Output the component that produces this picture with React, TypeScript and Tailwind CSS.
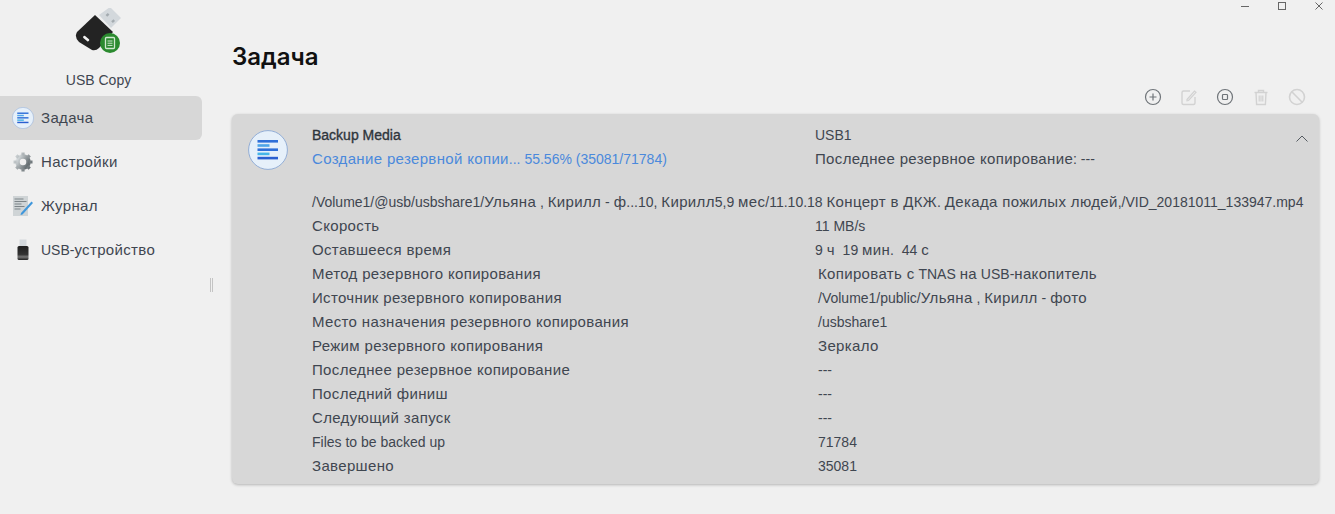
const rows: [string, string, boolean?][] = [
  ["Скорость", "11 MB/s", true],
  ["Оставшееся время", "9 ч  19 мин.  44 с", true],
  ["Метод резервного копирования", "Копировать с TNAS на USB-накопитель"],
  ["Источник резервного копирования", "/Volume1/public/Ульяна , Кирилл - фото"],
  ["Место назначения резервного копирования", "/usbshare1"],
  ["Режим резервного копирования", "Зеркало"],
  ["Последнее резервное копирование", "---"],
  ["Последний финиш", "---"],
  ["Следующий запуск", "---"],
  ["Files to be backed up", "71784"],
  ["Завершено", "35081"],
];

// cyrillic runs sit a bit larger than latin in the shot, so they get their own size
function Txt({ children }: { children: string }) {
  const parts = children.split(/([А-Яа-яЁё]+(?:\s+[А-Яа-яЁё]+)*)/);
  return (
    <>
      {parts.map((part, i) =>
        i % 2 === 1 ? (
          <span key={i} className="text-[15px] tracking-[0.34px]">
            {part}
          </span>
        ) : (
          part
        ),
      )}
    </>
  );
}

function TaskIcon({ size }: { size: number }) {
  return (
    <svg width={size} height={size} viewBox="0 0 40 40">
      <circle cx="20" cy="20" r="19.4" fill="#e6f0fa" stroke="#7f9fd0" strokeWidth="0.8" />
      <rect x="9.5" y="10" width="20.5" height="2.6" fill="#2f6fd8" />
      <rect x="9.5" y="14.2" width="12" height="2.6" fill="#4fa5e8" />
      <rect x="9.5" y="18.4" width="20.5" height="2.6" fill="#2f6fd8" />
      <rect x="9.5" y="22.6" width="12" height="2.6" fill="#45b5e8" />
      <rect x="9.5" y="26.8" width="20.5" height="2.6" fill="#2a5fd0" />
    </svg>
  );
}

function UsbLogo() {
  return (
    <svg width="48" height="48" viewBox="0 0 48 48">
      <path d="M24 7 L35 -1 L46 10 L36 20 Z" fill="#d3d8dc" />
      <rect x="31" y="6" width="3" height="2.4" fill="#a4abb0" transform="rotate(-42 32 7)" />
      <rect x="36.5" y="12" width="3" height="2.4" fill="#a4abb0" transform="rotate(-42 38 13)" />
      <path d="M20 7 L38 24 L24 40 Q21 43 17 42 L4 34 Q-1 29 2 24 Z" fill="#232323" />
      <rect x="8" y="29" width="7" height="2.6" rx="1" fill="#f2f2f2" transform="rotate(40 11 30)" />
      <circle cx="35" cy="35" r="10" fill="#2b8a2f" />
      <rect x="30.5" y="29.5" width="9" height="11" rx="1" fill="none" stroke="#cfe8cf" strokeWidth="1.3" />
      <path d="M32.5 33h5M32.5 35.2h5M32.5 37.4h5" stroke="#cfe8cf" strokeWidth="1" />
    </svg>
  );
}

function GearIcon() {
  return (
    <svg width="22" height="22" viewBox="0 0 22 22">
      <defs>
        <linearGradient id="gear" x1="0" x2="1" y1="0" y2="0.6">
          <stop offset="0" stopColor="#dfe4e6" />
          <stop offset="1" stopColor="#687074" />
        </linearGradient>
      </defs>
      <circle cx="11" cy="11" r="5.5" fill="none" stroke="url(#gear)" strokeWidth="4.5" />
      <path
        d="M11 1.500v3M11 17.500v3M1.500 11h3M17.500 11h3M4.300 4.300l2.200 2.200M15.500 15.500l2.200 2.200M4.300 17.700l2.200-2.200M15.500 6.500l2.200-2.200"
        stroke="url(#gear)"
        strokeWidth="3.200"
      />
    </svg>
  );
}

function LogIcon() {
  return (
    <svg width="22" height="22" viewBox="0 0 22 22">
      <rect x="1" y="1" width="15" height="20" fill="#cfd4d6" />
      <path d="M2.5 4h9M2.5 6.5h12M2.5 9h7M2.5 11.5h10M2.5 14h6" stroke="#7d8589" strokeWidth="1" />
      <path d="M9 18 L19.5 6.5 L21 8 L10.5 19.5 L8.5 20 Z" fill="#3f97dc" />
    </svg>
  );
}

function UsbDeviceIcon() {
  return (
    <svg width="22" height="22" viewBox="0 0 22 22">
      <defs>
        <linearGradient id="usbbody" x1="0" x2="0" y1="0" y2="1">
          <stop offset="0" stopColor="#1f1f1f" />
          <stop offset="0.6" stopColor="#333333" />
          <stop offset="0.78" stopColor="#777777" />
          <stop offset="1" stopColor="#1f1f1f" />
        </linearGradient>
      </defs>
      <rect x="7.500" y="0.500" width="7" height="7" fill="#d3d8dc" />
      <rect x="5.500" y="7" width="11" height="14" rx="1.500" fill="url(#usbbody)" />
    </svg>
  );
}

function NavItem({ icon, label, active }: { icon: React.ReactNode; label: string; active?: boolean }) {
  return (
    <div className={`flex h-11 w-[202px] items-center rounded-r-md pl-3 ${active ? "bg-[#d7d7d7]" : ""}`}>
      <span className="flex w-[22px] justify-center">{icon}</span>
      <span className="ml-[7px] text-[14px] text-[#3f4650]">
        <Txt>{label}</Txt>
      </span>
    </div>
  );
}

function ToolIcon({ children }: { children: React.ReactNode }) {
  return (
    <svg width="18" height="18" viewBox="0 0 18 18" fill="none" strokeWidth="1.2">
      {children}
    </svg>
  );
}

export default function App() {
  return (
    <div className="relative flex h-[514px] w-[1335px] overflow-hidden bg-[#f0f0f0] font-['Liberation_Sans',sans-serif] text-[14px] text-[#3f4650]">
      <aside className="relative w-[232px] shrink-0">
        <div className="flex w-[197px] flex-col items-center pt-[8px]">
          <UsbLogo />
          <div className="mt-[14px] h-[21px] leading-[21px]">USB Copy</div>
        </div>
        <nav className="mt-[5px]">
          <NavItem active label="Задача" icon={<TaskIcon size={22} />} />
          <NavItem label="Настройки" icon={<GearIcon />} />
          <NavItem label="Журнал" icon={<LogIcon />} />
          <NavItem label="USB-устройство" icon={<UsbDeviceIcon />} />
        </nav>
        <div className="absolute left-[210px] top-[278px] h-[14px] w-[3px] border-x border-[#c4c4c4]" />
      </aside>

      <main className="w-[1087px] pt-[42px]">
        <h1 className="h-[30px] font-['Inter',sans-serif] text-[24px] leading-[30px] font-semibold text-[#111111]">Задача</h1>
        <div className="mt-[16px] flex h-[18px] justify-end gap-[18px] pr-[13px]">
          <ToolIcon>
            <circle cx="9" cy="9" r="7.5" stroke="#6f7479" />
            <path d="M9 5.5v7M5.5 9h7" stroke="#6f7479" />
          </ToolIcon>
          <ToolIcon>
            <path d="M15 9v6a1.5 1.5 0 0 1-1.5 1.5h-10A1.5 1.5 0 0 1 2 15V4.500A1.500 1.500 0 0 1 3.500 3H10" stroke="#d2d2d2" strokeWidth="1.4" />
            <path d="M7 11.500 14.500 3l1.500 1.300L8.500 12.500 7 12.800Z" stroke="#d2d2d2" />
          </ToolIcon>
          <ToolIcon>
            <circle cx="9" cy="9" r="7.500" stroke="#6f7479" />
            <rect x="6.500" y="6.500" width="5" height="5" rx="0.800" stroke="#6f7479" />
          </ToolIcon>
          <ToolIcon>
            <path d="M2.500 4.500h13M6.500 4.500V2.500h5v2M4 4.500l.6 12h8.800l.6-12" stroke="#d2d2d2" strokeWidth="1.400" />
            <path d="M7.200 7.500v6M9 7.500v6M10.800 7.500v6" stroke="#d2d2d2" />
          </ToolIcon>
          <ToolIcon>
            <circle cx="9" cy="9" r="7.500" stroke="#d2d2d2" strokeWidth="1.600" />
            <path d="M3.800 3.800 14.200 14.200" stroke="#d2d2d2" strokeWidth="1.600" />
          </ToolIcon>
        </div>

        <section className="relative mt-[8px] h-[370px] w-[1087px] rounded-md bg-[#d7d7d7] pt-[9px] pl-[80px] shadow-[0_1px_3px_rgba(0,0,0,0.25)]">
          <div className="absolute left-[16px] top-[16px]">
            <TaskIcon size={40} />
          </div>
          <svg className="absolute right-[11px] top-[21px]" width="12" height="8" viewBox="0 0 12 8" fill="none">
            <path d="M0.500 6.500 6 1l5.500 5.500" stroke="#555b61" />
          </svg>
          <div className="flex h-6 items-center">
            <span className="w-[503px] text-[#2f353c] [-webkit-text-stroke:0.35px_#2f353c]">Backup Media</span>
            <span>USB1</span>
          </div>
          <div className="flex h-6 items-center">
            <span className="w-[503px] text-[#4a89dc]">
              <Txt>Создание резервной копии... 55.56% (35081/71784)</Txt>
            </span>
            <span>
              <Txt>Последнее резервное копирование: ---</Txt>
            </span>
          </div>
          <div className="mt-[19px] flex h-6 items-center whitespace-pre">
            <span>
              <Txt>/Volume1/@usb/usbshare1/Ульяна , Кирилл - ф...10, Кирилл5,9 мес/11.10.18 Концерт в ДКЖ. Декада пожилых людей,/VID_20181011_133947.mp4</Txt>
            </span>
          </div>
          {rows.map(([label, value, tight]) => (
            <div key={label} className="flex h-6 items-center whitespace-pre">
              <span className={tight ? "w-[503px]" : "w-[506px]"}>
                <Txt>{label}</Txt>
              </span>
              <span>
                <Txt>{value}</Txt>
              </span>
            </div>
          ))}
        </section>
      </main>

      <div className="absolute right-[12px] top-[2px] flex h-[8px] items-center gap-[29px]">
        <svg width="8" height="8" viewBox="0 0 8 8"><path d="M0 4.500h8" stroke="#666" /></svg>
        <svg width="8" height="8" viewBox="0 0 8 8"><rect x="0.500" y="0.500" width="7" height="7" fill="none" stroke="#666" /></svg>
        <svg width="8" height="8" viewBox="0 0 8 8"><path d="M0.500 0.500l7 7M7.500 0.500l-7 7" stroke="#666" /></svg>
      </div>
    </div>
  );
}
